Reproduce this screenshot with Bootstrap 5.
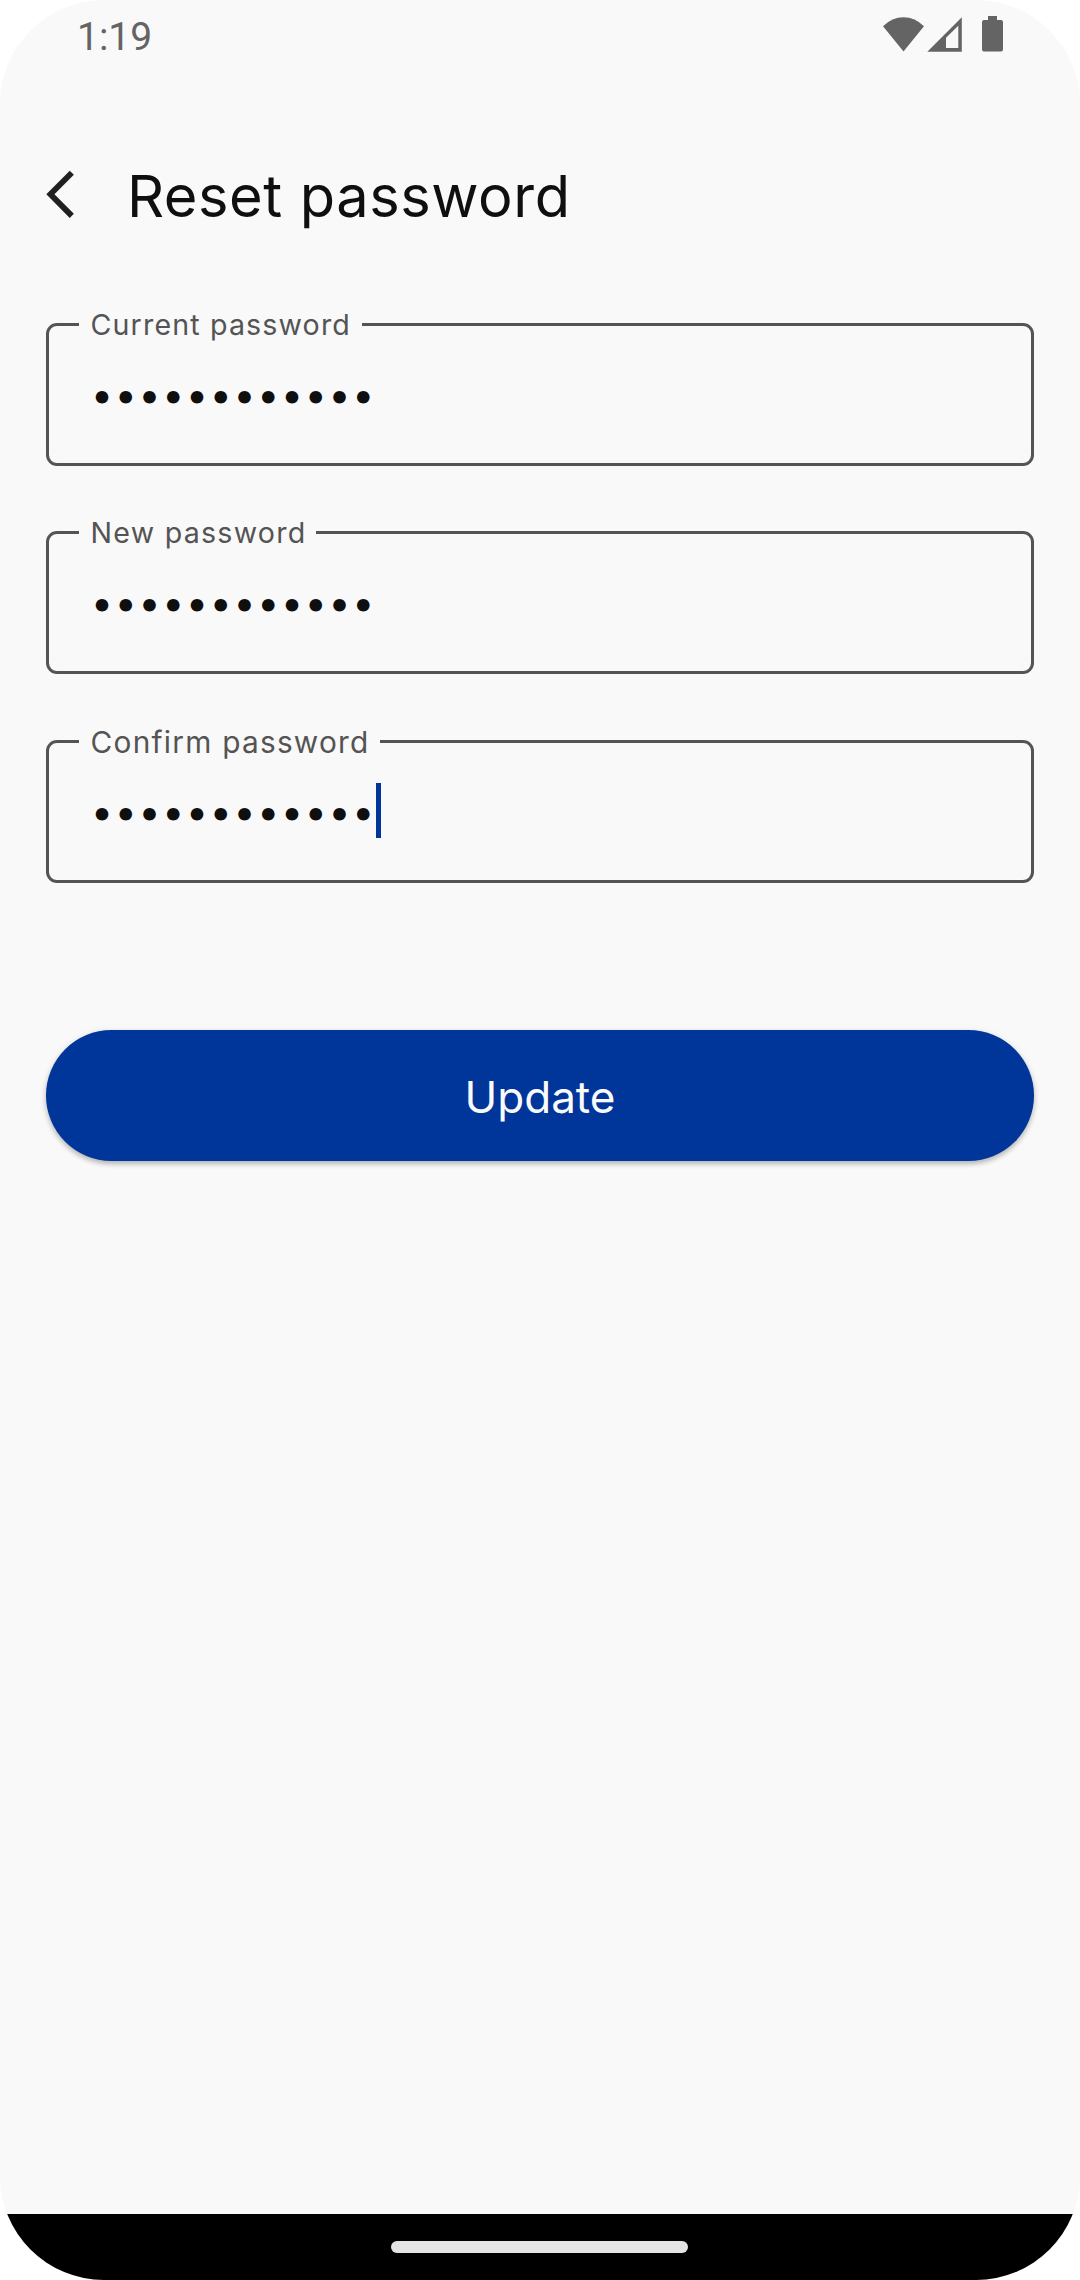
<!DOCTYPE html>
<html lang="en">
<head>
<meta charset="utf-8">
<meta name="viewport" content="width=device-width, initial-scale=1">
<title>Reset password</title>
<link rel="stylesheet" href="https://cdn.jsdelivr.net/npm/bootstrap@5.3.0/dist/css/bootstrap.min.css">
<style>
body{background:#fff;font-family:Inter,sans-serif;color:#0f0f0f}
.phone{width:1080px;height:2280px;border-radius:104px;background:#f9f9f9}
.status-bar{height:156px;padding:15px 76px 0 77px;color:#646464}
.clock{font:400 39px/44px Roboto,sans-serif}
.status-icons{width:122px;height:38px}
.title-bar{height:167px;padding-left:46px}
.back-icon{width:28px;height:48px;margin-top:14px}
.page-title{font-size:57.75px;line-height:80px;letter-spacing:.58px;font-weight:400;margin-left:52.9px}
.form-area{padding:0 46px}
.pw-field{height:143px;border:3px solid #545454;border-radius:11px}
.gap-a{margin-bottom:65px}
.gap-b{margin-bottom:66px}
.gap-c{margin-bottom:147px}
.pw-label{font-size:28.6px;line-height:36px;top:-19px;left:30px;width:283px;padding-left:11.5px;background:#f9f9f9;color:#545454;letter-spacing:1.15px;white-space:nowrap}
.pw-label.label-new{width:237px;letter-spacing:1.25px}
.pw-label.label-confirm{width:301px;font-size:29.8px;letter-spacing:1.25px}
.pw-dots{font-size:40px;line-height:60px;margin:39px 0 0 41.8px;letter-spacing:1.25px}
.caret{width:5px;height:55px;left:327px;top:40px;background:#00359a}
.btn-update,.btn-update:hover{height:131px;border:0;background:#00359a;color:#fafafa;font-size:44px;font-weight:400;padding:2px 0 0;box-shadow:0 3px 5px rgba(0,0,0,.24),0 1px 8px rgba(0,0,0,.07)}
.nav-strip{height:66px;background:#000}
.nav-pill{width:297px;height:12px;margin-right:1px;background:#e4e4e4}
</style>
</head>
<body>
<div class="phone d-flex flex-column overflow-hidden">
  <header class="status-bar d-flex justify-content-between align-items-start">
    <span class="clock">1:19</span>
    <svg class="status-icons" viewBox="882 15 122 38" fill="#646464" aria-hidden="true">
      <path d="M903.5 51.5 883 26.3Q892 17.3 903.5 17.3T924 26.3Z"/>
      <path fill-rule="evenodd" d="M927.3 51.7 961.8 17.2V51.7ZM946 37.8V48H958.3V25.8Z"/>
      <path d="M988 16H997V20H1001Q1003 20 1003 22V49.6Q1003 51.6 1001 51.6H984Q982 51.6 982 49.6V22Q982 20 984 20H988Z"/>
    </svg>
  </header>
  <div class="title-bar d-flex align-items-start">
    <svg class="back-icon" viewBox="46 170 28 48" fill="none" stroke="#202020" stroke-width="5.8" aria-hidden="true"><path d="M71.8 172.7 50.4 194.2 71.8 215.9"/></svg>
    <h1 class="page-title mb-0">Reset password</h1>
  </div>
  <main class="form-area flex-grow-1">
    <div class="pw-field gap-a position-relative d-flex align-items-start">
      <span class="pw-label position-absolute">Current password</span>
      <span class="pw-dots">••••••••••••</span>
    </div>
    <div class="pw-field gap-b position-relative d-flex align-items-start">
      <span class="pw-label label-new position-absolute">New password</span>
      <span class="pw-dots">••••••••••••</span>
    </div>
    <div class="pw-field gap-c position-relative d-flex align-items-start">
      <span class="pw-label label-confirm position-absolute">Confirm password</span>
      <span class="pw-dots">••••••••••••</span>
      <span class="caret position-absolute"></span>
    </div>
    <button type="button" class="btn btn-update w-100 rounded-pill d-flex align-items-center justify-content-center">Update</button>
  </main>
  <footer class="nav-strip d-flex justify-content-center align-items-center"><div class="nav-pill rounded-pill"></div></footer>
</div>
<script src="https://cdn.jsdelivr.net/npm/bootstrap@5.3.0/dist/js/bootstrap.bundle.min.js"></script>
</body>
</html>
